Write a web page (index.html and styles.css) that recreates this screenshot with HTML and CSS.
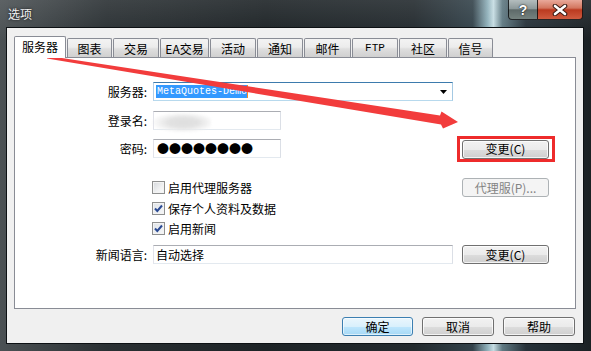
FILE: index.html
```html
<!DOCTYPE html>
<html lang="zh">
<head>
<meta charset="utf-8">
<title>选项</title>
<link rel="stylesheet" href="styles.css">
</head>
<body>
<div class="window">
  <div class="titlebar">
    <span class="title">选项</span>
    <div class="caps">
      <div class="cap help">?</div>
      <div class="cap close">
        <svg width="16" height="12" viewBox="0 0 16 12"><path d="M3 2 L13 10 M13 2 L3 10" stroke="#3a1a12" stroke-width="4.6" stroke-linecap="round"/><path d="M3 2 L13 10 M13 2 L3 10" stroke="#fff" stroke-width="2.6" stroke-linecap="round"/></svg>
      </div>
    </div>
  </div>
  <div class="client">
    <div class="tabs">
      <div class="tab sel">服务器</div>
      <div class="tab w45">图表</div>
      <div class="tab w46">交易</div>
      <div class="tab w49">EA交易</div>
      <div class="tab w46">活动</div>
      <div class="tab w46">通知</div>
      <div class="tab w47">邮件</div>
      <div class="tab w46 ftp">FTP</div>
      <div class="tab w48">社区</div>
      <div class="tab w45">信号</div>
    </div>
    <div class="panel">
      <div class="row r1">
        <span class="lbl">服务器:</span>
        <div class="cell">
          <div class="field full combo">
            <span class="seltext">MetaQuotes-Demo</span><span class="caret"></span>
            <svg class="drop" width="7" height="4" viewBox="0 0 7 4"><path d="M0 0 H7 L3.5 4 Z" fill="#000"/></svg>
          </div>
        </div>
      </div>
      <div class="row r2">
        <span class="lbl">登录名:</span>
        <div class="cell">
          <div class="field short login"><span class="blur"></span></div>
        </div>
      </div>
      <div class="row r3">
        <span class="lbl">密码:</span>
        <div class="cell">
          <div class="field short"><span class="dots">●●●●●●●●</span></div>
        </div>
        <span class="mark"><button class="btn">变更(C)</button></span>
      </div>
      <div class="row r4">
        <span class="lbl"></span>
        <div class="cell"><span class="cb"></span><span>启用代理服务器</span></div>
        <button class="btn side disabled">代理服(P)...</button>
      </div>
      <div class="row r5">
        <span class="lbl"></span>
        <div class="cell"><span class="cb checked"><svg width="11" height="11" viewBox="0 0 11 11"><path d="M2 5.5 L4.3 8 L9 2.5" fill="none" stroke="#2b4a93" stroke-width="2"/></svg></span><span>保存个人资料及数据</span></div>
      </div>
      <div class="row r6">
        <span class="lbl"></span>
        <div class="cell"><span class="cb checked"><svg width="11" height="11" viewBox="0 0 11 11"><path d="M2 5.5 L4.3 8 L9 2.5" fill="none" stroke="#2b4a93" stroke-width="2"/></svg></span><span>启用新闻</span></div>
      </div>
      <div class="row r7">
        <span class="lbl">新闻语言:</span>
        <div class="cell">
          <div class="field full plain"><span class="val">自动选择</span></div>
        </div>
        <button class="btn side">变更(C)</button>
      </div>
    </div>
    <div class="actions">
      <button class="btn default w71">确定</button>
      <button class="btn w72">取消</button>
      <button class="btn w72">帮助</button>
    </div>
  </div>
  <svg class="annot" width="591" height="351" viewBox="0 0 591 351">
    <polygon points="47,55.8 440,115.5 441.5,111.5 458,122 443,128.5 441,124.5 47,58.4" fill="#f23c3c"/>
  </svg>
</div>
</body>
</html>
```

FILE: styles.css
```css
* { box-sizing: border-box; }
html, body { margin: 0; padding: 0; }
body {
  width: 591px;
  height: 351px;
  overflow: hidden;
  font: 12px/1 "Noto Sans CJK SC", "Liberation Sans", sans-serif;
  color: #000;
  background: #1c2225;
}
.window {
  position: relative;
  width: 591px;
  height: 351px;
  display: flex;
  flex-direction: column;
  background:
    linear-gradient(180deg, rgba(255,255,255,0.10), rgba(255,255,255,0) 40px),
    linear-gradient(90deg, #4b5154 0%, #2a3033 18%, #1d2326 45%, #232a2e 70%, #33424a 80%, #8fb0ba 82.5%, #c5dce2 83.5%, #5f7982 85%, #27323a 89%, #1b2124 100%);
}
.titlebar {
  height: 28px;
  flex: none;
  display: flex;
  align-items: flex-start;
}
.title {
  margin: 7px 0 0 8px;
  line-height: 14px;
  color: #f2f2f2;
  text-shadow: 0 0 3px rgba(0,0,0,0.9);
}
.caps {
  margin-left: auto;
  margin-right: 8px;
  display: flex;
}
.cap {
  height: 20px;
  display: flex;
  align-items: center;
  justify-content: center;
  border: 1px solid rgba(10,14,16,0.85);
  border-top: none;
}
.cap.help {
  width: 29px;
  border-right: none;
  border-radius: 0 0 0 4px;
  background: linear-gradient(180deg, #b4bdbe 0%, #8d999a 45%, #5e6a69 52%, #75827f 100%);
  color: #fff;
  font: bold 14px/1 "Liberation Sans", sans-serif;
  text-shadow: 0 0 2px #222, 0 0 1px #222;
}
.cap.close {
  width: 46px;
  border-radius: 0 0 4px 0;
  background: linear-gradient(180deg, #e9a99a 0%, #d3765f 42%, #bb3a20 52%, #d05b3f 100%);
}
.client {
  flex: 1;
  margin: 0 8px 8px 7px;
  padding: 8px 7px 0;
  background: #f0f0f0;
  display: flex;
  flex-direction: column;
  box-shadow: 0 0 0 1px #0d1114;
}
.tabs {
  height: 21px;
  flex: none;
  display: flex;
  align-items: flex-end;
  gap: 1px;
}
.tab {
  height: 19px;
  border: 1px solid #898c95;
  border-bottom: none;
  border-radius: 2px 2px 0 0;
  background: linear-gradient(180deg, #f3f3f3 0%, #ececec 45%, #dedede 55%, #d0d0d0 100%);
  display: flex;
  align-items: center;
  justify-content: center;
  padding-top: 1px;
  white-space: nowrap;
}
.tab.sel {
  width: 52px;
  height: 22px;
  margin-bottom: -1px;
  background: #fff;
  position: relative;
  z-index: 1;
  padding: 0 0 2px;
}
.tab.ftp { font: 11px/1 "Liberation Mono", monospace; }
.w45 { width: 45px; }
.w46 { width: 46px; }
.w47 { width: 47px; }
.w48 { width: 48px; }
.w49 { width: 49px; }
.panel {
  height: 252px;
  flex: none;
  border: 1px solid #898c95;
  background: #fff;
  padding-top: 24px;
}
.row {
  display: flex;
  align-items: center;
  height: 19px;
}
.r2 { margin-top: 10px; }
.r3 { margin-top: 9px; }
.r4 { margin-top: 20px; }
.r5 { margin-top: 2px; }
.r6 { margin-top: 1px; }
.r7 { margin-top: 7px; }
.lbl {
  width: 132px;
  margin-right: 6px;
  text-align: right;
  flex: none;
}
.cell {
  width: 300px;
  flex: none;
  display: flex;
  align-items: center;
}
.field {
  height: 19px;
  border: 1px solid;
  border-color: #abadb3 #dbdfe6 #e3e9ef #e2e3ea;
  background: #fff;
  display: flex;
  align-items: center;
  position: relative;
}
.field.full { width: 300px; }
.field.short { width: 128px; }
.combo { border-color: #3d7bad #a4c9e3 #b7d9ed #b5cfe7; }
.seltext {
  margin-left: 2px;
  padding: 0 0 0 1px;
  background: #3399ff;
  color: #fff;
  font: 10px/13px "Liberation Mono", monospace;
}
.caret {
  width: 1px;
  height: 13px;
  background: #ff8a1e;
}
.drop { margin-left: auto; margin-right: 5px; }
.blur {
  position: absolute;
  left: -9px;
  top: 0;
  width: 66px;
  height: 21px;
  background: radial-gradient(ellipse 50% 50% at 58% 50%, #dedede 0%, #e2e2e2 45%, rgba(236,236,236,0.8) 70%, rgba(255,255,255,0) 100%);
  filter: blur(1px);
}
.dots {
  margin-left: 3px;
  font-size: 12px;
  letter-spacing: 0;
  line-height: 12px;
}
.val { margin-left: 2px; }
.cb {
  width: 13px;
  height: 13px;
  margin-left: -1px;
  margin-right: 3px;
  border: 1px solid #8e8f8f;
  background: linear-gradient(135deg, #d5d8dc 0%, #f0f1f2 60%, #fbfbfb 100%);
  box-shadow: inset 0 0 0 1px #f3f3f3;
  display: flex;
  align-items: center;
  justify-content: center;
  flex: none;
}
.cb.checked { background: linear-gradient(135deg, #dfe3e8 0%, #f6f7f8 100%); }
.btn {
  height: 19px;
  padding: 0;
  border: 1px solid #707070;
  border-radius: 3px;
  background: linear-gradient(180deg, #f2f2f2 0%, #ebebeb 50%, #dddddd 51%, #cfcfcf 100%);
  box-shadow: inset 0 0 0 1px rgba(255,255,255,0.75);
  font: 12px/1 "Noto Sans CJK SC", "Liberation Sans", sans-serif;
  color: #000;
  display: flex;
  align-items: center;
  justify-content: center;
  flex: none;
}
.btn.side { width: 87px; margin-left: 9px; }
.mark {
  flex: none;
  margin-left: 4px;
  padding: 1px 3px 0 2px;
  border: 3px solid #ee2b2b;
  display: flex;
}
.mark .btn { width: 87px; }
.btn.disabled {
  border-color: #adb2b5;
  background: #f4f4f4;
  box-shadow: none;
  color: #838383;
}
.btn.default {
  border-color: #3c7fb1;
  background: linear-gradient(180deg, #eaf6fd 0%, #d9f0fc 50%, #bee6fd 51%, #a7d9f5 100%);
  box-shadow: inset 0 0 0 1px rgba(255,255,255,0.6);
}
.actions {
  display: flex;
  justify-content: flex-end;
  gap: 9px;
  margin-top: 8px;
  padding-right: 1px;
}
.w71 { width: 71px; }
.w72 { width: 72px; }
.annot {
  position: absolute;
  left: 0;
  top: 0;
  pointer-events: none;
}
```
